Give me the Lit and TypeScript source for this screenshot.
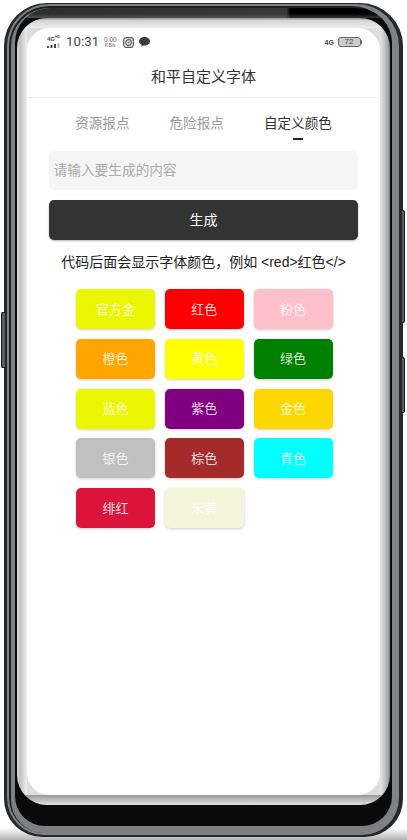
import { LitElement, html, css, svg } from "lit";
import { customElement } from "lit/decorators.js";

const SWATCHES: [string, string][] = [
  ["官方金", "#ebf700"], ["红色", "#ff0000"], ["粉色", "#ffc0cb"],
  ["橙色", "#ffa500"], ["黄色", "#ffff00"], ["绿色", "#008000"],
  ["蓝色", "#ebf700"], ["紫色", "#800080"], ["金色", "#ffd700"],
  ["银色", "#c0c0c0"], ["棕色", "#a52a2a"], ["青色", "#00ffff"],
  ["绯红", "#dc143c"], ["米黄", "#f5f5dc"],
];

@customElement("app-root")
export class AppRoot extends LitElement {
  static styles = css`
    :host {
      display: block; position: relative; width: 407px; height: 840px; overflow: hidden;
      padding: 3px 4px 3px 4px; box-sizing: border-box;
      background: linear-gradient(to bottom, #fff 828px, #b4b4b4 840px);
      font-family: "Liberation Sans", "Noto Sans CJK SC", sans-serif;
      color: #333;
    }
    .layer { display: flex; flex-direction: column; box-sizing: border-box; flex: 1; min-height: 0; }
    .shell { height: 834px; background: #25272a; border-radius: 43px 43px 38px 38px; padding: 1px 4px 2px 2.5px; }
    .metal { background: #7f8286; border-radius: 42px 42px 37px 37px; padding: 2px 7px 2px 2.5px; }
    .rim { background: #1f2123; border-radius: 40px 40px 35px 35px; padding: 2px 0 0 2px; }
    .band { background: #7c7f83; border-radius: 38px 38px 33px 33px; padding: 0 0 7px 4px; }
    .bezel {
      border-radius: 35px 35px 30px 30px; padding: 10px 2px 21px 2px;
      background:
        linear-gradient(to bottom, transparent 55%, rgba(120,120,120,.45)) top / 100% 10px no-repeat,
        linear-gradient(to right, #2c2c2c 0, #383838 72%, #000 73%) top / 100% 10px no-repeat,
        #0a0a0a;
    }
    .ring {
      border-radius: 30px; padding: 10px;
      background:
        linear-gradient(to bottom, #8f8f8f, #d4d4d4 25%, #ececec) top / 100% 10px no-repeat,
        linear-gradient(to bottom, #9a9a9a, #e2e2e2) bottom / 100% 10px no-repeat,
        linear-gradient(to right, #dedede, #c0c0c0 30%, #efefef) left / 10px 100% no-repeat,
        linear-gradient(to right, #e8e8e8, #bbb 60%, #8a8a8a) right / 10px 100% no-repeat,
        #ddd;
    }
    .screen { background: #fff; border-radius: 22px; overflow: hidden; }
    .btn-side { position: absolute; background: #5a5c60; border: 1px solid #1d1e20; box-sizing: border-box; }
    .btn-l { left: 1px; top: 312px; height: 56px; width: 4px; border-right: none; border-radius: 2px 0 0 2px; }
    .btn-r1 { right: 2px; top: 210px; height: 113px; width: 3px; border-left: none; border-radius: 0 2px 2px 0; }
    .btn-r2 { right: 2px; top: 357px; height: 56px; width: 3px; border-left: none; border-radius: 0 2px 2px 0; }

    .status { height: 28px; flex: none; display: flex; align-items: center; padding: 0 18px 0 20px; box-sizing: border-box; color: #444; }
    .signal { width: 13px; display: flex; flex-direction: column; align-items: flex-start; gap: 1px; }
    .net { font-size: 6px; line-height: 5px; font-weight: 700; white-space: nowrap; }
    .net sup { font-size: 3.500px; line-height: 0; }
    .bars { display: block; }
    .time { font: 13.200px/16px Roboto, sans-serif; margin-left: 6px; letter-spacing: 0.100px; color: #444; }
    .speed { display: flex; flex-direction: column; align-items: center; margin-left: 4px; font-size: 6.500px; line-height: 6px; color: #666; width: 14px; }
    .speed small { font-size: 5px; line-height: 5px; }
    .st-icon { display: block; margin-left: 6px; flex: none; }
    .bubble { margin-left: 5px; }
    .spacer { flex: 1; }
    .net4g { font-size: 7px; line-height: 7px; font-weight: 700; color: #444; width: 9px; }
    .battery {
      width: 23px; height: 10px; margin-left: 4px; box-sizing: border-box; border: 1px solid #666; border-radius: 3px;
      background: #ccc; font-size: 8px; line-height: 8px; text-align: center; color: #444; flex: none;
    }
    .cap { width: 1.500px; height: 4px; background: #666; border-radius: 0 1px 1px 0; flex: none; }

    .title { height: 42px; flex: none; box-sizing: border-box; border-bottom: 1px solid #eee; display: flex; align-items: center; justify-content: center; font-size: 15px; color: #333; padding-bottom: 3px; }
    .body { padding: 0 22px; display: flex; flex-direction: column; }
    .tabs { display: flex; justify-content: center; gap: 40px; padding-top: 17px; margin-bottom: 11px; }
    .tab { display: flex; flex-direction: column; align-items: center; font-size: 13.600px; line-height: 18px; color: #999; }
    .tab::after { content: ""; display: block; width: 10px; height: 2px; margin-top: 5px; background: transparent; }
    .tab.on { color: #333; }
    .tab.on::after { background: #222; }
    .input { height: 39px; flex: none; background: #f5f5f5; border-radius: 5px; box-sizing: border-box; display: flex; align-items: center; padding: 0 0 3px 4.500px; font-size: 13.700px; color: #aaa; }
    .gen { height: 40px; flex: none; margin-top: 10px; background: #333; border-radius: 5px; box-sizing: border-box; color: #fff; font-size: 14px; display: flex; align-items: center; justify-content: center; padding-bottom: 2px; box-shadow: 0 1px 2px rgba(0,0,0,.3); }
    .hint { margin-top: 13px; line-height: 18px; font-size: 14px; color: #222; text-align: center; white-space: nowrap; }
    .grid { margin: 18px 0 0 27px; display: grid; grid-template-columns: repeat(3, 79px); column-gap: 9.750px; row-gap: 9.750px; justify-content: start; }
    .swatch { height: 40px; border-radius: 5px; box-sizing: border-box; display: flex; align-items: center; justify-content: center; color: rgba(255,255,255,.85); font-size: 13px; padding-bottom: 2px; box-shadow: 0 1px 3px rgba(0,0,0,.2); }
  `;

  render() {
    return html`
      <span class="btn-side btn-l"></span>
      <span class="btn-side btn-r1"></span>
      <span class="btn-side btn-r2"></span>
      <div class="layer shell"><div class="layer metal"><div class="layer rim"><div class="layer band">
        <div class="layer bezel"><div class="layer ring"><div class="layer screen">
          <div class="status">
            <div class="signal">
              <span class="net">4G<sup>HD</sup></span>
              <svg class="bars" width="13" height="5" viewBox="0 0 13 5">
                ${svg`<rect x="0" y="3" width="2" height="2" fill="#444"/><rect x="3.500" y="2" width="2" height="3" fill="#444"/><rect x="7" y="1" width="2" height="4" fill="#444"/><rect x="10.500" y="0" width="2" height="5" fill="#bbb"/>`}
              </svg>
            </div>
            <span class="time">10:31</span>
            <div class="speed"><span>0.00</span><small>KB/s</small></div>
            <svg class="st-icon" width="11" height="11" viewBox="0 0 11 11" fill="none" stroke="#555">
              ${svg`<rect x="0.700" y="0.700" width="9.600" height="9.600" rx="2.500" stroke-width="1.200"/><circle cx="5.500" cy="5.500" r="2.800" stroke-width="1.200"/><circle cx="5.500" cy="5.500" r="1" fill="#555" stroke="none"/>`}
            </svg>
            <svg class="st-icon bubble" width="11" height="10" viewBox="0 0 11 10">
              ${svg`<path d="M5.500 0C8.500 0 11 1.900 11 4.300S8.500 8.600 5.500 8.600c-.5 0-1 0-1.400-.1L2.300 10l.2-2.200C1 7 0 5.700 0 4.300 0 1.900 2.500 0 5.500 0z" fill="#3c3c3c"/>`}
            </svg>
            <span class="spacer"></span>
            <span class="net4g">4G</span>
            <span class="battery">72</span><span class="cap"></span>
          </div>
          <div class="title">和平自定义字体</div>
          <div class="body">
            <div class="tabs">
              <div class="tab">资源报点</div>
              <div class="tab">危险报点</div>
              <div class="tab on">自定义颜色</div>
            </div>
            <div class="input">请输入要生成的内容</div>
            <div class="gen">生成</div>
            <div class="hint">代码后面会显示字体颜色，例如 &lt;red&gt;红色&lt;/&gt;</div>
            <div class="grid">
              ${SWATCHES.map(([n, c]) => html`<div class="swatch" style="background:${c}">${n}</div>`)}
            </div>
          </div>
        </div></div></div>
      </div></div></div></div>
    `;
  }
}
